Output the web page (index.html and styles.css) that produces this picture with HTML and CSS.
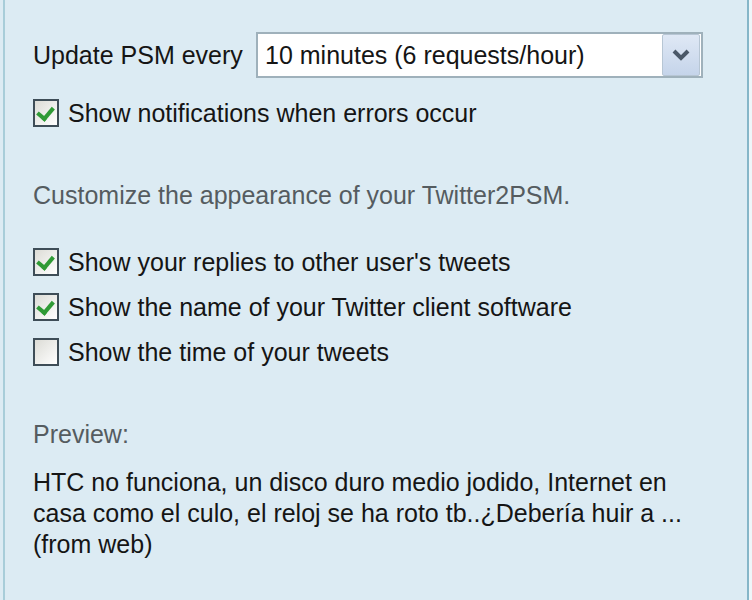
FILE: index.html
```html
<!DOCTYPE html>
<html lang="en">
<head>
    <meta charset="UTF-8">
    <title>Twitter2PSM Options</title>
    <link rel="stylesheet" href="styles.css">
</head>
<body>
    <div class="panel">
        <div class="update-row">
            <span class="label">Update PSM every</span>
            <div class="select">
                <span class="select-value">10 minutes (6 requests/hour)</span>
                <span class="select-btn">
                    <svg width="20" height="12" viewBox="0 0 20 12">
                        <path d="M3 2 L10 9 L17 2" fill="none" stroke="#4a5868" stroke-width="4"/>
                    </svg>
                </span>
            </div>
        </div>

        <label class="check first">
            <span class="box checked"></span>
            <span>Show notifications when errors occur</span>
        </label>

        <p class="hint">Customize the appearance of your Twitter2PSM.</p>

        <div class="options">
            <label class="check">
                <span class="box checked"></span>
                <span>Show your replies to other user's tweets</span>
            </label>
            <label class="check">
                <span class="box checked"></span>
                <span>Show the name of your Twitter client software</span>
            </label>
            <label class="check">
                <span class="box"></span>
                <span>Show the time of your tweets</span>
            </label>
        </div>

        <p class="hint preview-title">Preview:</p>
        <p class="preview">HTC no funciona, un disco duro medio jodido, Internet en<br>casa como el culo, el reloj se ha roto tb..¿Debería huir a ...<br>(from web)</p>
    </div>
</body>
</html>
```

FILE: styles.css
```css
html, body {
    margin: 0;
    height: 100%;
    background: #dcebf3;
}

body {
    font-family: 'Liberation Sans', Arial, sans-serif;
    font-size: 25px;
    color: #151515;
}

.panel {
    height: 600px;
    box-sizing: border-box;
    margin-left: 3px;
    margin-right: 3px;
    padding: 32px 0 0 28px;
    border-left: 2px solid #a8cdd9;
    border-right: 2px solid #86b6c8;
    box-shadow: 3px 0 0 #eef6f9;
}

.update-row {
    display: flex;
    align-items: center;
}

.label {
    width: 223px;
}

.select {
    display: flex;
    align-items: center;
    width: 447px;
    height: 46px;
    box-sizing: border-box;
    border: 2px solid #9fb1bb;
    background: #fff;
}

.select-value {
    flex: 1;
    padding-left: 7px;
}

.select-btn {
    display: flex;
    align-items: center;
    justify-content: center;
    width: 36px;
    height: 40px;
    margin-right: 1px;
    border: 1px solid #b7c6d4;
    border-radius: 2px;
    background: linear-gradient(#dfe8f5, #c5d4ea);
}

.check {
    display: flex;
    align-items: center;
    height: 44px;
}

.check.first {
    margin-top: 13px;
}

.box {
    width: 22px;
    height: 24px;
    margin-right: 9px;
    border: 2px solid #3e4d57;
    background: linear-gradient(135deg, #dcdcd6, #ffffff);
    position: relative;
}

.box.checked::after {
    content: "";
    position: absolute;
    left: 5px;
    top: 3px;
    width: 7px;
    height: 12px;
    border: solid #2f9a35;
    border-width: 0 4px 4px 0;
    transform: rotate(40deg);
}

.hint {
    margin: 0;
    color: #555c60;
}

.check.first + .hint {
    margin-top: 46px;
}

.options {
    display: flex;
    flex-direction: column;
    gap: 1px;
    margin-top: 30px;
}

.preview-title {
    margin-top: 46px;
}

.preview {
    margin: 18px 0 0;
    line-height: 31px;
}
```
